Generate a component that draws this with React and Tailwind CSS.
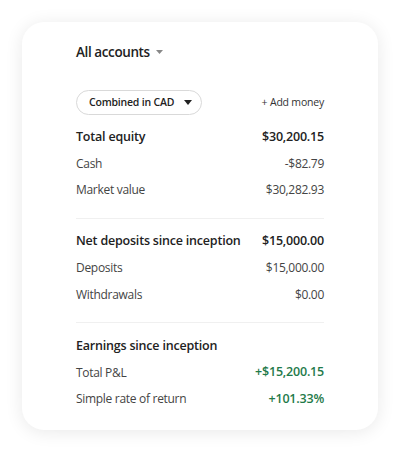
const font = { fontFamily: '"Open Sans", "Liberation Sans", sans-serif' };

function Row({ label, value, bold, green }) {
  const strong = "text-[12.5px] font-semibold tracking-[-0.2px]";
  const plain = "text-[12px] tracking-[-0.3px] text-[#444]";
  return (
    <div className="flex h-[26.5px] items-center justify-between whitespace-nowrap">
      <span className={bold ? `${strong} text-[#222]` : plain}>{label}</span>
      <span className={green ? `${strong} text-[#1f7a4a]` : bold ? `${strong} text-[#222]` : plain}>
        {value}
      </span>
    </div>
  );
}

export default function App() {
  return (
    <div className="w-[400px] h-[452px] bg-white pt-[22px] pl-[22px]" style={font}>
      <div className="w-[356px] h-[408px] rounded-[22px] bg-white shadow-[0_2px_18px_rgba(0,0,0,0.09)] px-[54px] pt-[20px]">
        <div className="flex h-[20px] items-center gap-[6px]">
          <span className="text-[13.5px] font-semibold tracking-[-0.4px] text-[#222]">All accounts</span>
          <svg width="7" height="4" viewBox="0 0 7 4">
            <path d="M0 0h7L3.5 4z" fill="#888" />
          </svg>
        </div>

        <div className="mt-[28px] flex items-center justify-between whitespace-nowrap">
          <div className="flex h-[25px] w-[126px] items-center rounded-full border border-[#d9d9d9] pl-[12px] gap-[10px]">
            <span className="text-[10.5px] font-semibold tracking-[-0.2px] text-[#222]">Combined in CAD</span>
            <svg width="8" height="5" viewBox="0 0 8 5">
              <path d="M0 0h8L4 5z" fill="#222" />
            </svg>
          </div>
          <span className="text-[10.5px] tracking-[-0.2px] text-[#333]">+ Add money</span>
        </div>

        <div className="mt-[9px]">
          <Row label="Total equity" value="$30,200.15" bold />
          <Row label="Cash" value="-$82.79" />
          <Row label="Market value" value="$30,282.93" />
        </div>

        <div className="mt-[14px] h-px bg-[#f0f0f0]" />

        <div className="mt-[10px]">
          <Row label="Net deposits since inception" value="$15,000.00" bold />
          <Row label="Deposits" value="$15,000.00" />
          <Row label="Withdrawals" value="$0.00" />
        </div>

        <div className="mt-[14px] h-px bg-[#f0f0f0]" />

        <div className="mt-[10px]">
          <Row label="Earnings since inception" value="" bold />
          <Row label="Total P&L" value="+$15,200.15" green />
          <Row label="Simple rate of return" value="+101.33%" green />
        </div>
      </div>
    </div>
  );
}
